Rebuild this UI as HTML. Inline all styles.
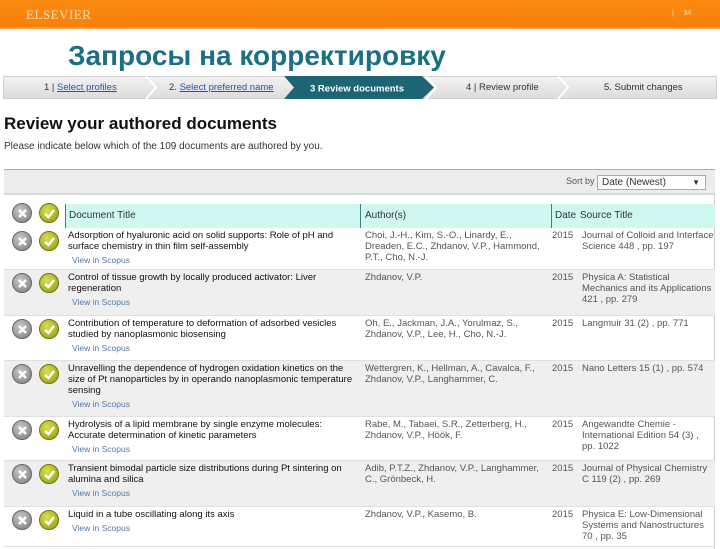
<!DOCTYPE html>
<html><head><meta charset="utf-8"><style>
*{margin:0;padding:0;box-sizing:border-box}
body{width:720px;height:540px;overflow:hidden;background:#fff;font-family:"Liberation Sans",Arial,sans-serif;position:relative}
.top{position:absolute;left:0;top:0;width:720px;height:29px;background:linear-gradient(#fb8a10,#f7810a);border-bottom:2px solid #f0a050}
.logo{position:absolute;left:26px;top:7px;color:#fde0b0;font-family:"Liberation Serif",serif;font-size:13px;letter-spacing:0.5px}
.pg{position:absolute;left:672px;top:10px;color:#fde0b0;font-size:7px}
h1{position:absolute;left:68px;top:40px;font-size:28px;color:#1b6f86;font-weight:bold;white-space:nowrap}
.steps{position:absolute;left:3px;top:76px;width:714px;height:23px;background:linear-gradient(#f2f2f2,#dcdcdc);border:1px solid #cfcfcf}
.st{position:absolute;top:5px;font-size:9.5px;color:#333;white-space:nowrap}
.st u{color:#2255aa}
.act{position:absolute;left:284px;top:76px;width:150px;height:23px}
h2{position:absolute;left:4px;top:114px;font-size:17px;font-weight:bold;color:#111}
.sub{position:absolute;left:4px;top:141px;font-size:10px;color:#333}
.panel{position:absolute;left:4px;top:169px;width:711px;height:380px;border-top:1px solid #aaa;border-right:1px solid #ccc}
.tb{position:absolute;left:4px;top:170px;width:711px;height:25px;background:#ececec;border-bottom:2px solid #d8d8d8}
.sort{position:absolute;left:566px;top:176px;font-size:9px;color:#555}
.sel{position:absolute;left:597px;top:175px;width:109px;height:15px;background:#fff;border:1px solid #aaa;font-size:10px;padding:1px 4px;color:#333}
.sel b{position:absolute;right:5px;top:2px;font-size:8px}
.hdr{position:absolute;left:65px;top:204px;width:650px;height:24px;background:#cff9f0;font-size:10px;color:#333}
.hdr span{position:absolute;top:6px}
.hdr i{position:absolute;top:0;width:1px;height:24px;background:#3f7f7f}
.row{position:absolute;left:4px;width:711px;border-bottom:1px solid #e0e0e0}
.g{background:#efefef}
.ic{position:absolute;width:20px;height:20px;border-radius:50%}
.x{left:8px;top:3px;background:radial-gradient(circle at 40% 35%,#c8c8c8,#7a7a7a);border:1px solid #666}
.c{left:35px;top:3px;background:radial-gradient(circle at 40% 35%,#d8e050,#8a9a10);border:1px solid #7a7010}
.ic svg{position:absolute;left:0;top:0}
.t{position:absolute;left:64px;top:2px;width:290px;font-size:9.5px;line-height:11px;color:#111}
.v{display:block;margin-left:4px;margin-top:3px;font-size:8.5px;color:#5577aa}
.a{position:absolute;left:361px;top:2px;width:178px;font-size:9.5px;line-height:11px;color:#555}
.d{position:absolute;left:548px;top:2px;font-size:9.5px;color:#555}
.s{position:absolute;left:578px;top:2px;width:132px;font-size:9.5px;line-height:11px;color:#555}
</style></head><body>
<div class="top"><div class="logo">ELSEVIER</div><div class="pg">|&nbsp;&nbsp;&nbsp;&nbsp;&nbsp;34</div></div>
<h1>Запросы на корректировку</h1>
<div class="steps">
<span class="st" style="left:40px">1 | <u>Select profiles</u></span>
<span class="st" style="left:165px">2. <u>Select preferred name</u></span>
<span class="st" style="left:462px">4 | Review profile</span>
<span class="st" style="left:600px">5. Submit changes</span>
<svg style="position:absolute;left:140px;top:-1px" width="14" height="23"><path d="M2 0 L12 11.5 L2 23" fill="none" stroke="#fff" stroke-width="2"/></svg>
<svg style="position:absolute;left:420px;top:-1px" width="14" height="23"><path d="M2 0 L12 11.5 L2 23" fill="none" stroke="#fff" stroke-width="2"/></svg>
<svg style="position:absolute;left:552px;top:-1px" width="14" height="23"><path d="M2 0 L12 11.5 L2 23" fill="none" stroke="#fff" stroke-width="2"/></svg>
</div>
<svg class="act" width="150" height="23"><path d="M0 0 H138 L150 11.5 L138 23 H0 L10 11.5 Z" fill="#1d6474"/><text x="26" y="15.5" font-family="Liberation Sans" font-size="9.5" font-weight="bold" fill="#fff">3  Review documents</text></svg>
<h2>Review your authored documents</h2>
<div class="sub">Please indicate below which of the 109 documents are authored by you.</div>
<div class="panel"></div>
<div class="tb"></div>
<div class="sort">Sort by</div>
<div class="sel">Date (Newest)<b>▼</b></div>
<div class="row" style="top:200px;height:28px;border:0"><div class="ic x"><svg width="20" height="20"><path d="M6 6L13 13M13 6L6 13" stroke="#fff" stroke-width="2.5"/></svg></div><div class="ic c"><svg width="20" height="20"><path d="M5 10L8.5 13L14 6" stroke="#fff" stroke-width="2.5" fill="none"/></svg></div></div>
<div class="hdr"><i style="left:0"></i><span style="left:4px">Document Title</span><i style="left:295px"></i><span style="left:300px">Author(s)</span><i style="left:486px"></i><span style="left:490px">Date</span><span style="left:515px">Source Title</span></div>

<div class="row" style="top:228px;height:42px"><div class="ic x"><svg width="20" height="20"><path d="M6 6L13 13M13 6L6 13" stroke="#fff" stroke-width="2.5"/></svg></div><div class="ic c"><svg width="20" height="20"><path d="M5 10L8.5 13L14 6" stroke="#fff" stroke-width="2.5" fill="none"/></svg></div>
<div class="t">Adsorption of hyaluronic acid on solid supports: Role of pH and surface chemistry in thin film self-assembly<span class="v">View in Scopus</span></div>
<div class="a">Choi, J.-H., Kim, S.-O., Linardy, E., Dreaden, E.C., Zhdanov, V.P., Hammond, P.T., Cho, N.-J.</div><div class="d">2015</div><div class="s">Journal of Colloid and Interface Science 448 , pp. 197</div></div>

<div class="row g" style="top:270px;height:46px"><div class="ic x"><svg width="20" height="20"><path d="M6 6L13 13M13 6L6 13" stroke="#fff" stroke-width="2.5"/></svg></div><div class="ic c"><svg width="20" height="20"><path d="M5 10L8.5 13L14 6" stroke="#fff" stroke-width="2.5" fill="none"/></svg></div>
<div class="t">Control of tissue growth by locally produced activator: Liver regeneration<span class="v">View in Scopus</span></div>
<div class="a">Zhdanov, V.P.</div><div class="d">2015</div><div class="s">Physica A: Statistical Mechanics and its Applications 421 , pp. 279</div></div>

<div class="row" style="top:316px;height:45px"><div class="ic x"><svg width="20" height="20"><path d="M6 6L13 13M13 6L6 13" stroke="#fff" stroke-width="2.5"/></svg></div><div class="ic c"><svg width="20" height="20"><path d="M5 10L8.5 13L14 6" stroke="#fff" stroke-width="2.5" fill="none"/></svg></div>
<div class="t">Contribution of temperature to deformation of adsorbed vesicles studied by nanoplasmonic biosensing<span class="v">View in Scopus</span></div>
<div class="a">Oh, E., Jackman, J.A., Yorulmaz, S., Zhdanov, V.P., Lee, H., Cho, N.-J.</div><div class="d">2015</div><div class="s">Langmuir 31 (2) , pp. 771</div></div>

<div class="row g" style="top:361px;height:56px"><div class="ic x"><svg width="20" height="20"><path d="M6 6L13 13M13 6L6 13" stroke="#fff" stroke-width="2.5"/></svg></div><div class="ic c"><svg width="20" height="20"><path d="M5 10L8.5 13L14 6" stroke="#fff" stroke-width="2.5" fill="none"/></svg></div>
<div class="t">Unravelling the dependence of hydrogen oxidation kinetics on the size of Pt nanoparticles by in operando nanoplasmonic temperature sensing<span class="v">View in Scopus</span></div>
<div class="a">Wettergren, K., Hellman, A., Cavalca, F., Zhdanov, V.P., Langhammer, C.</div><div class="d">2015</div><div class="s">Nano Letters 15 (1) , pp. 574</div></div>

<div class="row" style="top:417px;height:44px"><div class="ic x"><svg width="20" height="20"><path d="M6 6L13 13M13 6L6 13" stroke="#fff" stroke-width="2.5"/></svg></div><div class="ic c"><svg width="20" height="20"><path d="M5 10L8.5 13L14 6" stroke="#fff" stroke-width="2.5" fill="none"/></svg></div>
<div class="t">Hydrolysis of a lipid membrane by single enzyme molecules: Accurate determination of kinetic parameters<span class="v">View in Scopus</span></div>
<div class="a">Rabe, M., Tabaei, S.R., Zetterberg, H., Zhdanov, V.P., Höök, F.</div><div class="d">2015</div><div class="s">Angewandte Chemie - International Edition 54 (3) , pp. 1022</div></div>

<div class="row g" style="top:461px;height:46px"><div class="ic x"><svg width="20" height="20"><path d="M6 6L13 13M13 6L6 13" stroke="#fff" stroke-width="2.5"/></svg></div><div class="ic c"><svg width="20" height="20"><path d="M5 10L8.5 13L14 6" stroke="#fff" stroke-width="2.5" fill="none"/></svg></div>
<div class="t">Transient bimodal particle size distributions during Pt sintering on alumina and silica<span class="v">View in Scopus</span></div>
<div class="a">Adib, P.T.Z., Zhdanov, V.P., Langhammer, C., Grönbeck, H.</div><div class="d">2015</div><div class="s">Journal of Physical Chemistry C 119 (2) , pp. 269</div></div>

<div class="row" style="top:507px;height:40px"><div class="ic x"><svg width="20" height="20"><path d="M6 6L13 13M13 6L6 13" stroke="#fff" stroke-width="2.5"/></svg></div><div class="ic c"><svg width="20" height="20"><path d="M5 10L8.5 13L14 6" stroke="#fff" stroke-width="2.5" fill="none"/></svg></div>
<div class="t">Liquid in a tube oscillating along its axis<span class="v">View in Scopus</span></div>
<div class="a">Zhdanov, V.P., Kasemo, B.</div><div class="d">2015</div><div class="s">Physica E: Low-Dimensional Systems and Nanostructures 70 , pp. 35</div></div>
</body></html>
